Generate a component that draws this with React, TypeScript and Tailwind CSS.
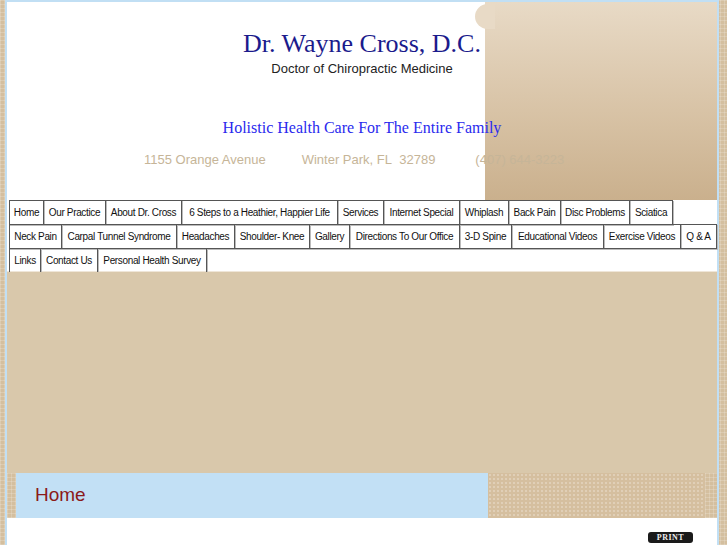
const navRows: { label: string; w: string }[][] = [
  [
    { label: 'Home', w: 'w-[35px]' },
    { label: 'Our Practice', w: 'w-[63px]' },
    { label: 'About Dr. Cross', w: 'w-[77px]' },
    { label: '6 Steps to a Heathier, Happier Life', w: 'w-[157px]' },
    { label: 'Services', w: 'w-[47px]' },
    { label: 'Internet Special', w: 'w-[77px]' },
    { label: 'Whiplash', w: 'w-[50px]' },
    { label: 'Back Pain', w: 'w-[53px]' },
    { label: 'Disc Problems', w: 'w-[70px]' },
    { label: 'Sciatica', w: 'w-[44px]' },
  ],
  [
    { label: 'Neck Pain', w: 'w-[53px]' },
    { label: 'Carpal Tunnel Syndrome', w: 'w-[116px]' },
    { label: 'Headaches', w: 'w-[59px]' },
    { label: 'Shoulder- Knee', w: 'w-[76px]' },
    { label: 'Gallery', w: 'w-[41px]' },
    { label: 'Directions To Our Office', w: 'w-[111px]' },
    { label: '3-D Spine', w: 'w-[53px]' },
    { label: 'Educational Videos', w: 'w-[93px]' },
    { label: 'Exercise Videos', w: 'w-[78px]' },
    { label: 'Q & A', w: 'w-[37px]' },
  ],
  [
    { label: 'Links', w: 'w-[32px]' },
    { label: 'Contact Us', w: 'w-[58px]' },
    { label: 'Personal Health Survey', w: 'w-[110px]' },
  ],
];

const gridTexture =
  'bg-[#d4bf9f] bg-[image:repeating-linear-gradient(0deg,rgba(255,255,255,0.18)_0px,rgba(255,255,255,0.18)_1px,transparent_1px,transparent_4px),repeating-linear-gradient(90deg,rgba(255,255,255,0.18)_0px,rgba(255,255,255,0.18)_1px,transparent_1px,transparent_4px)]';

const App = () => {
  return (
    <div className={`flex h-[545px] overflow-hidden pl-[5px] pr-[8px] ${gridTexture}`}>
      <div className="flex flex-1 flex-col border-x-2 border-t-2 border-[#c1dff4] bg-[#d9c8ab]">
        {/* header */}
        <header className="relative h-[198px] bg-[image:linear-gradient(to_right,#ffffff_478px,transparent_478px),linear-gradient(to_bottom,#e8dac6,#d8c3a6_55%,#cab08d)]">
          <div className="absolute left-[468px] top-[2px] h-[25px] w-[20px] rounded-l-full bg-[#e8dac6]" />
          <div className="relative flex flex-col items-center">
            <h1 className="mt-[28px] font-['Liberation_Serif',serif] text-[26px] leading-[28px] text-[#1b1b8c]">
              Dr. Wayne Cross, D.C.
            </h1>
            <p className="mt-[4px] font-['Liberation_Sans',Arial,sans-serif] text-[13px] leading-[14px] text-[#222]">
              Doctor of Chiropractic Medicine
            </p>
            <p className="mt-[43px] font-['Liberation_Serif',serif] text-[16px] leading-[18px] text-[#2a2aee]">
              Holistic Health Care For The Entire Family
            </p>
          </div>
          <div className="relative mt-[15px] flex gap-[36px] pl-[137px] font-['Liberation_Sans',Arial,sans-serif] text-[13px] leading-[15px] text-[#c6b598]">
            <span>1155 Orange Avenue</span>
            <span>Winter Park, FL&nbsp;&nbsp;32789</span>
            <span className="ml-[4px]">(407) 644-3223</span>
          </div>
        </header>

        {/* navigation */}
        <nav className="h-[72px] border-b border-[#efe6d8] bg-white pl-[2px] font-['Liberation_Sans',Arial,sans-serif] text-[10px] tracking-[-0.35px] text-[#111]">
          {navRows.map((row, i) => (
            <div key={i} className="-mt-px flex first:mt-0">
              {row.map((item, j) => (
                <div
                  key={item.label}
                  className={`${item.w} ${j > 0 ? '-ml-px' : ''} flex h-[25px] shrink-0 items-center justify-center whitespace-nowrap border border-[#555] shadow-[1px_1px_0_#bbb]`}
                >
                  {item.label}
                </div>
              ))}
            </div>
          ))}
        </nav>

        <div className="h-[201px] bg-[#d9c8ab]" />

        {/* page title */}
        <div className="flex h-[45px]">
          <div className={`w-[9px] ${gridTexture}`} />
          <div className="flex w-[472px] items-center bg-[#c2e0f5] pl-[19px] font-['Liberation_Sans',Arial,sans-serif] text-[19px] text-[#8b1a1a]">
            Home
          </div>
          <div className="flex-1 bg-[#d5bf9f] bg-[image:radial-gradient(rgba(255,255,255,0.25)_1px,transparent_1px)] bg-[length:4px_4px]" />
          <div className={`w-[12px] ${gridTexture}`} />
        </div>

        {/* content */}
        <div className="flex flex-1 justify-end bg-white pr-[24px] pt-[14px]">
          <div className="flex h-[11px] w-[45px] items-center justify-center rounded-[3px] bg-[#1a1a1a] font-['Liberation_Serif',serif] text-[8px] font-bold tracking-[0.5px] text-[#eee]">
            PRINT
          </div>
        </div>
      </div>
    </div>
  );
};

export default App;
